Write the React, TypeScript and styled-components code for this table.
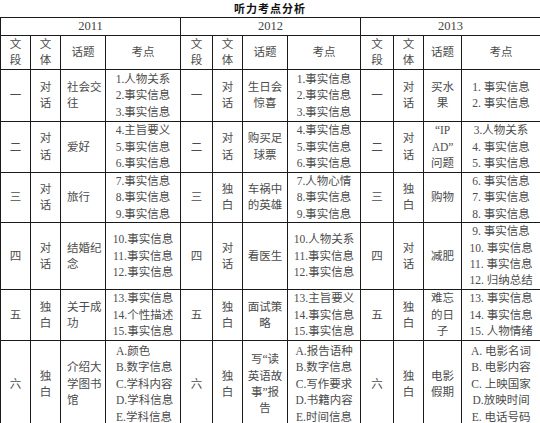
import styled, { createGlobalStyle } from 'styled-components'

const GlobalStyle = createGlobalStyle`
  html, body { margin: 0; padding: 0; background: #fff; }
  body {
    font-family: "Liberation Serif", "Noto Sans CJK SC", serif;
    color: #4c4c4c;
  }
`

const Page = styled.div`
  width: 540px;
  height: 423px;
  overflow: hidden;
`

const Title = styled.div`
  height: 17px;
  line-height: 17px;
  text-align: center;
  font-family: "Noto Sans CJK SC", sans-serif;
  font-weight: 700;
  font-size: 11px;
  letter-spacing: 1px;
  color: #111;
`

const Table = styled.table`
  width: 541px;
  border-collapse: collapse;
  table-layout: fixed;
  font-size: 11.5px;
  line-height: 16.4px;
`

const Cell = styled.td<{ $h?: number; $align?: 'left' | 'center'; $pad?: number }>`
  border: 1px solid #1a1a1a;
  height: ${({ $h }) => ($h ? `${$h - 1}px` : 'auto')};
  padding: 0 ${({ $pad }) => $pad ?? 1}px;
  text-align: ${({ $align }) => $align ?? 'center'};
  vertical-align: middle;
  white-space: nowrap;
  overflow: hidden;
`

const YearCell = styled(Cell)`
  font-size: 12.5px;
  color: #444;
`

const Line = styled.div`
  display: block;
`

type Block = {
  seg: string
  genre: string[]
  topic: string[]
  points: string[]
}

const years = ['2011', '2012', '2013']
const widths = [30, 30, 45, 75, 32, 30, 45, 73, 33, 30, 38, 79]
const rowHeights = [52, 51, 49, 67, 51, 87]

const DUI = ['对', '话']
const DU = ['独', '白']

const data: Block[][] = [
  [
    { seg: '一', genre: DUI, topic: ['社会交', '往'], points: ['1.人物关系', '2.事实信息', '3.事实信息'] },
    { seg: '一', genre: DUI, topic: ['生日会', '惊喜'], points: ['1.事实信息', '2.事实信息', '3.事实信息'] },
    { seg: '一', genre: DUI, topic: ['买水', '果'], points: ['1. 事实信息', '2. 事实信息'] },
  ],
  [
    { seg: '二', genre: DUI, topic: ['爱好'], points: ['4.主旨要义', '5.事实信息', '6.事实信息'] },
    { seg: '二', genre: DUI, topic: ['购买足', '球票'], points: ['4.事实信息', '5.事实信息', '6.事实信息'] },
    { seg: '二', genre: DUI, topic: ['“IP', 'AD”', '问题'], points: ['3.人物关系', '4. 事实信息', '5. 事实信息'] },
  ],
  [
    { seg: '三', genre: DUI, topic: ['旅行'], points: ['7.事实信息', '8.事实信息', '9.事实信息'] },
    { seg: '三', genre: DU, topic: ['车祸中', '的英雄'], points: ['7.人物心情', '8.事实信息', '9.事实信息'] },
    { seg: '三', genre: DU, topic: ['购物'], points: ['6. 事实信息', '7. 事实信息', '8. 事实信息'] },
  ],
  [
    { seg: '四', genre: DUI, topic: ['结婚纪', '念'], points: ['10.事实信息', '11.事实信息', '12.事实信息'] },
    { seg: '四', genre: DUI, topic: ['看医生'], points: ['10.人物关系', '11.事实信息', '12.事实信息'] },
    { seg: '四', genre: DUI, topic: ['减肥'], points: ['9. 事实信息', '10. 事实信息', '11. 事实信息', '12. 归纳总结'] },
  ],
  [
    { seg: '五', genre: DU, topic: ['关于成', '功'], points: ['13.事实信息', '14.个性描述', '15.事实信息'] },
    { seg: '五', genre: DU, topic: ['面试策', '略'], points: ['13.主旨要义', '14.事实信息', '15.事实信息'] },
    { seg: '五', genre: DU, topic: ['难忘', '的日', '子'], points: ['13. 事实信息', '14. 事实信息', '15. 人物情绪'] },
  ],
  [
    { seg: '六', genre: DU, topic: ['介绍大', '学图书', '馆'], points: [' A.颜色', 'B.数字信息', 'C.学科内容', 'D.学科信息', 'E.学科信息'] },
    { seg: '六', genre: DU, topic: ['写“读', '英语故', '事”报', '告'], points: ['A.报告语种', 'B.数字信息', 'C.写作要求', 'D.书籍内容', 'E.时间信息'] },
    { seg: '六', genre: DU, topic: ['电影', '假期'], points: ['A. 电影名词', 'B. 电影内容', 'C. 上映国家', 'D.放映时间', 'E. 电话号码'] },
  ],
]

function Lines({ items }: { items: string[] }) {
  return (
    <>
      {items.map((t, i) => (
        <Line key={i}>{t}</Line>
      ))}
    </>
  )
}

export default function App() {
  return (
    <Page>
      <GlobalStyle />
      <Title>听力考点分析</Title>
      <Table>
        <colgroup>
          {widths.map((w, i) => (
            <col key={i} style={{ width: w }} />
          ))}
        </colgroup>
        <tbody>
          <tr>
            {years.map((y) => (
              <YearCell key={y} colSpan={4} $h={18}>
                {y}
              </YearCell>
            ))}
          </tr>
          <tr>
            {years.map((y) => [
              <Cell key={y + 'a'} $h={33}><Lines items={['文', '段']} /></Cell>,
              <Cell key={y + 'b'}><Lines items={['文', '体']} /></Cell>,
              <Cell key={y + 'c'}>话题</Cell>,
              <Cell key={y + 'd'}>考点</Cell>,
            ])}
          </tr>
          {data.map((row, r) => (
            <tr key={r}>
              {row.map((b, yi) => {
                const first = yi === 0
                return [
                  <Cell key={yi + 'a'} $h={rowHeights[r]}>{b.seg}</Cell>,
                  <Cell key={yi + 'b'}><Lines items={b.genre} /></Cell>,
                  <Cell key={yi + 'c'} $align={first ? 'left' : 'center'} $pad={first ? 6 : 1}>
                    <Lines items={b.topic} />
                  </Cell>,
                  <Cell key={yi + 'd'} $align={first && r === 5 ? 'left' : 'center'} $pad={first && r === 5 ? 10 : 1}>
                    <Lines items={b.points} />
                  </Cell>,
                ]
              })}
            </tr>
          ))}
        </tbody>
      </Table>
    </Page>
  )
}
